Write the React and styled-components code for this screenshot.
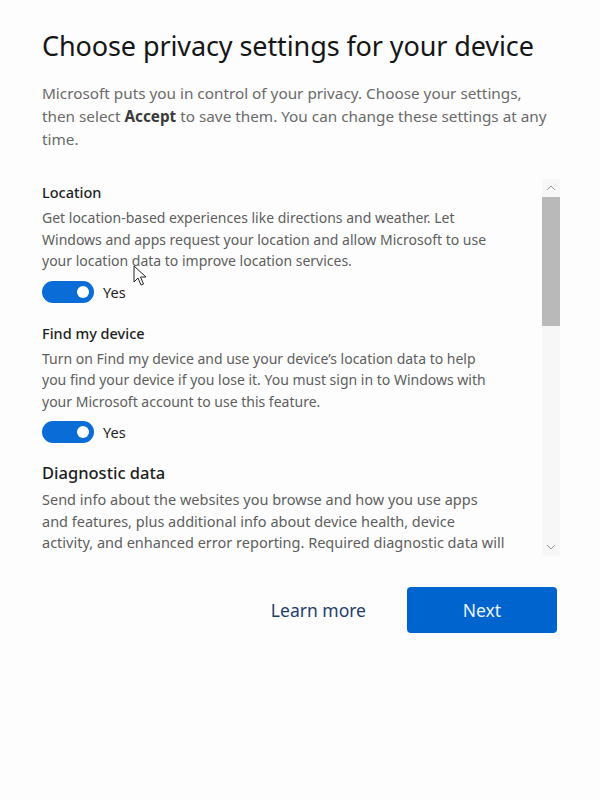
import styled, { createGlobalStyle } from "styled-components";

const GlobalStyle = createGlobalStyle`
  html, body {
    margin: 0;
    padding: 0;
    background: #fdfdfd;
  }
  body {
    font-family: "Noto Sans", "Open Sans", "DejaVu Sans", sans-serif;
    color: #1b1b1b;
  }
`;

const Page = styled.div`
  width: 600px;
  height: 800px;
  box-sizing: border-box;
  padding: 26px 40px 0 42px;
  position: relative;
`;

const Title = styled.h1`
  margin: 0;
  font-size: 27px;
  font-weight: 400;
  line-height: 40px;
  color: #161616;
  letter-spacing: -0.1px;
`;

const Intro = styled.p`
  margin: 16px 0 0;
  max-width: 510px;
  font-size: 15.3px;
  line-height: 23px;
  color: #6a6a6a;

  b {
    color: #3a3a3a;
    font-weight: 700;
  }
`;

const ScrollArea = styled.div`
  display: flex;
  margin-top: 28px;
  height: 377px;
`;

const Content = styled.div`
  flex: 1;
  overflow: hidden;
  padding-right: 45px;
  position: relative;
`;

const Section = styled.section`
  margin-bottom: 17px;
`;

const Heading = styled.h2`
  margin: 0;
  font-size: ${(p) => (p.$large ? "16.5px" : "14.5px")};
  font-weight: 500;
  line-height: 26px;
  color: #1e1e1e;
`;

const Desc = styled.p`
  margin: ${(p) => (p.$large ? "3px -8px 0 0" : "2px 0 0")};
  font-size: ${(p) => (p.$large ? "14.5px" : "14px")};
  line-height: 21.5px;
  color: #5e5e5e;
`;

const ToggleRow = styled.div`
  display: flex;
  align-items: center;
  gap: 9px;
  margin-top: 9px;
`;

const Toggle = styled.div`
  width: 52px;
  height: 22px;
  border-radius: 11px;
  background: #0a6cd6;
  display: flex;
  align-items: center;
  justify-content: flex-end;
  padding-right: 5px;
  box-sizing: border-box;
`;

const Knob = styled.span`
  width: 12px;
  height: 12px;
  border-radius: 50%;
  background: #ffffff;
`;

const ToggleLabel = styled.span`
  font-size: 14.5px;
  color: #1e1e1e;
`;

const Scrollbar = styled.div`
  width: 18px;
  display: flex;
  flex-direction: column;
  align-items: center;
  background: #f7f7f7;
`;

const Arrow = styled.div`
  height: 18px;
  display: flex;
  align-items: center;
  justify-content: center;
  color: #9a9a9a;
`;

const Track = styled.div`
  flex: 1;
  width: 100%;
`;

const Thumb = styled.div`
  width: 100%;
  height: 129px;
  background: #b9b9b9;
`;

const Footer = styled.div`
  display: flex;
  justify-content: flex-end;
  align-items: center;
  gap: 41px;
  margin-top: 31px;
  margin-right: 3px;
`;

const LinkButton = styled.button`
  border: none;
  background: none;
  font-family: inherit;
  font-size: 17.5px;
  color: #1f3d6e;
  padding: 0;
  cursor: pointer;
`;

const PrimaryButton = styled.button`
  width: 150px;
  height: 46px;
  border: none;
  border-radius: 4px;
  background: #0064cf;
  color: #eaf3ff;
  font-family: inherit;
  font-size: 17.5px;
  cursor: pointer;
`;

const Cursor = styled.svg`
  position: absolute;
  left: 91px;
  top: 86px;
`;

const Chevron = ({ up }) => (
  <svg width="10" height="6" viewBox="0 0 10 6">
    <path
      d={up ? "M1 5 L5 1 L9 5" : "M1 1 L5 5 L9 1"}
      fill="none"
      stroke="currentColor"
      strokeWidth="1"
    />
  </svg>
);

const sections = [
  {
    title: "Location",
    text: "Get location-based experiences like directions and weather. Let Windows and apps request your location and allow Microsoft to use your location data to improve location services.",
    toggle: true,
  },
  {
    title: "Find my device",
    text: "Turn on Find my device and use your device\u2019s location data to help you find your device if you lose it. You must sign in to Windows with your Microsoft account to use this feature.",
    toggle: true,
  },
  {
    title: "Diagnostic data",
    text: "Send info about the websites you browse and how you use apps and features, plus additional info about device health, device activity, and enhanced error reporting. Required diagnostic data will always be included when you choose to send optional diagnostic data.",
    large: true,
  },
];

const App = () => {
  return (
    <Page>
      <GlobalStyle />
      <Title>Choose privacy settings for your device</Title>
      <Intro>
        Microsoft puts you in control of your privacy. Choose your settings,
        then select <b>Accept</b> to save them. You can change these settings
        at any time.
      </Intro>
      <ScrollArea>
        <Content>
          {sections.map((s) => (
            <Section key={s.title}>
              <Heading $large={s.large}>{s.title}</Heading>
              <Desc $large={s.large}>{s.text}</Desc>
              {s.toggle && (
                <ToggleRow>
                  <Toggle>
                    <Knob />
                  </Toggle>
                  <ToggleLabel>Yes</ToggleLabel>
                </ToggleRow>
              )}
            </Section>
          ))}
          <Cursor width="14" height="22" viewBox="0 0 14 22">
            <path
              d="M1 1 L1 17 L5 13 L8 20 L10.5 19 L7.5 12 L13 12 Z"
              fill="#ffffff"
              stroke="#222222"
              strokeWidth="1"
              strokeLinejoin="round"
            />
          </Cursor>
        </Content>
        <Scrollbar>
          <Arrow>
            <Chevron up />
          </Arrow>
          <Thumb />
          <Track />
          <Arrow>
            <Chevron />
          </Arrow>
        </Scrollbar>
      </ScrollArea>
      <Footer>
        <LinkButton>Learn more</LinkButton>
        <PrimaryButton>Next</PrimaryButton>
      </Footer>
    </Page>
  );
};

export default App;
